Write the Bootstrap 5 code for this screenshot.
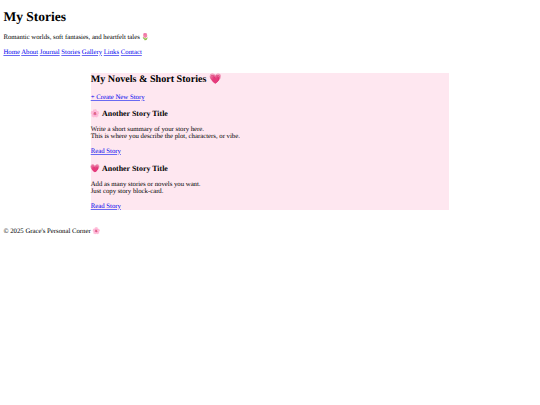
<!DOCTYPE html>
<html lang="en">
<head>
    <meta charset="UTF-8">
    <meta name="viewport" content="width=device-width, initial-scale=1.0">
    <title>My Stories</title>
    <link href="https://cdn.jsdelivr.net/npm/bootstrap@5.3.0/dist/css/bootstrap.min.css" rel="stylesheet">
    <style>
        body {
            font-family: "Liberation Serif", serif;
            font-size: 6.75px;
            line-height: 7.6px;
            color: #000;
            background: #fff;
            text-rendering: geometricPrecision;
        }
        a { color: #00e; text-decoration-color: #6a6af2; }
        .page-head { padding: 9.05px 3.4px 0; }
        .page-head h1 { font-size: 13.5px; font-weight: 700; line-height: 15.6px; margin: 0 0 9.75px; }
        .page-head p { margin: 0 0 6.75px; }
        .story-box {
            width: 358.6px;
            margin: 17px auto 0;
            background: #fee7f0;
        }
        .story-box h2 { font-size: 10.125px; font-weight: 700; line-height: 13px; margin: 0 0 7.6px; }
        .story-box h3 { font-size: 7.9px; font-weight: 700; line-height: 9.1px; margin: 7.3px 0 7.9px; }
        .story-box h3.next-story { margin-top: 8.4px; }
        .story-box p { margin: 0 0 6.75px; }
        .story-box p.story-link { margin: 0; }
        .page-foot { margin: 18px 3.4px 0; }
    </style>
</head>
<body>
    <header class="page-head">
        <h1>My Stories</h1>
        <p>Romantic worlds, soft fantasies, and heartfelt tales 🌷</p>
        <nav>
            <a href="#">Home</a>
            <a href="#">About</a>
            <a href="#">Journal</a>
            <a href="#">Stories</a>
            <a href="#">Gallery</a>
            <a href="#">Links</a>
            <a href="#">Contact</a>
        </nav>
    </header>
    <main class="story-box">
        <h2>My Novels &amp; Short Stories 💗</h2>
        <p class="story-link"><a href="#">+ Create New Story</a></p>
        <h3>🌸 Another Story Title</h3>
        <p>Write a short summary of your story here.<br>This is where you describe the plot, characters, or vibe.</p>
        <p class="story-link"><a href="#">Read Story</a></p>
        <h3 class="next-story">💗 Another Story Title</h3>
        <p>Add as many stories or novels you want.<br>Just copy story block-card.</p>
        <p class="story-link"><a href="#">Read Story</a></p>
    </main>
    <footer class="page-foot">© 2025 Grace's Personal Corner 🌸</footer>
    <script src="https://cdn.jsdelivr.net/npm/bootstrap@5.3.0/dist/js/bootstrap.bundle.min.js"></script>
</body>
</html>
